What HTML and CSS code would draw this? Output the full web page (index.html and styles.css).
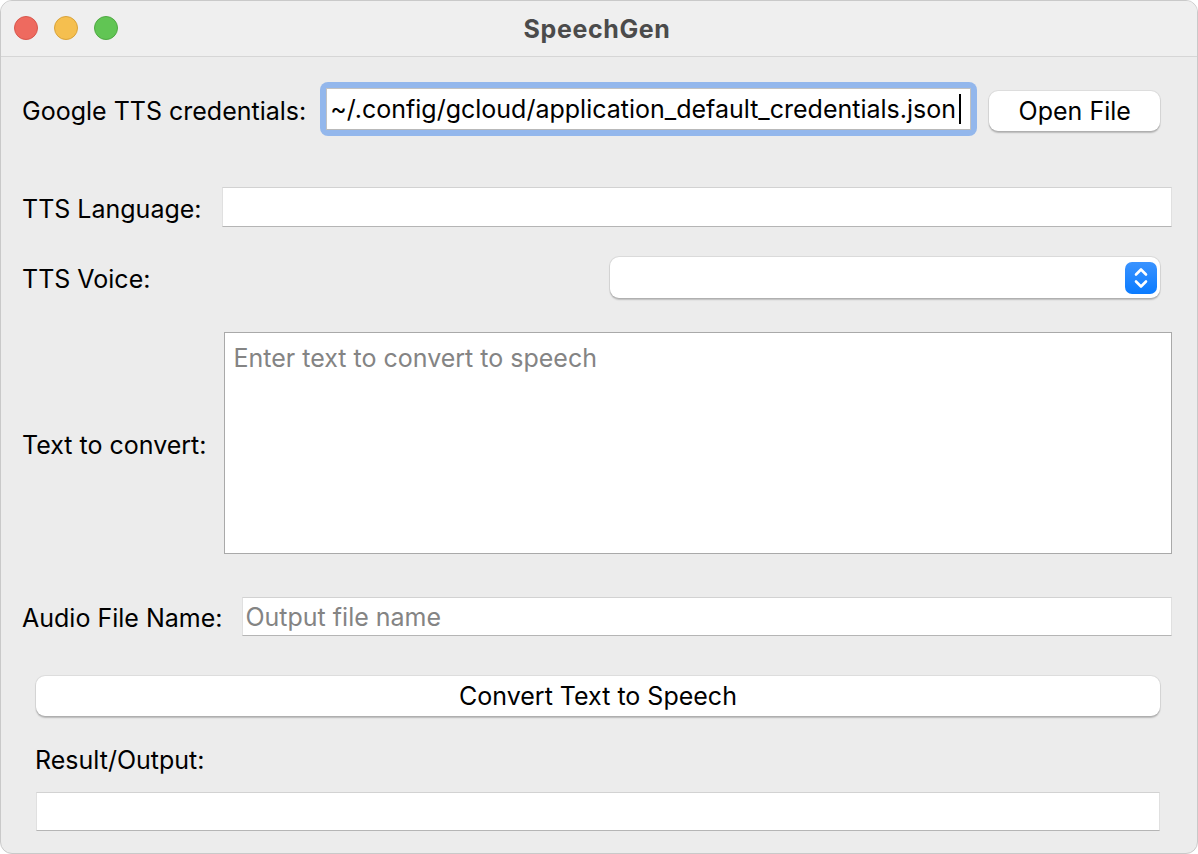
FILE: index.html
```html
<!DOCTYPE html>
<html lang="en">
<head>
<meta charset="utf-8">
<title>SpeechGen</title>
<link rel="stylesheet" href="styles.css">
</head>
<body>
<div class="window">
  <header class="titlebar">
    <div class="lights">
      <span class="light red"></span>
      <span class="light yellow"></span>
      <span class="light green"></span>
    </div>
    <div class="title">SpeechGen</div>
  </header>
  <main class="content">
    <div class="row row-cred">
      <label class="label">Google TTS credentials:</label>
      <div class="focus-ring">
        <div class="entry entry-focused">~/.config/gcloud/application_default_credentials.json<span class="caret"></span></div>
      </div>
      <button class="btn btn-open">Open File</button>
    </div>

    <div class="row row-lang">
      <label class="label">TTS Language:</label>
      <div class="entry entry-plain"></div>
    </div>

    <div class="row row-voice">
      <label class="label">TTS Voice:</label>
      <div class="spacer"></div>
      <div class="select">
        <span class="stepper">
          <svg width="20" height="26" viewBox="0 0 20 26" aria-hidden="true">
            <path d="M5 9.5 L10 4.5 L15 9.5" fill="none" stroke="#fff" stroke-width="2.6" stroke-linecap="round" stroke-linejoin="round"/>
            <path d="M5 16.5 L10 21.5 L15 16.5" fill="none" stroke="#fff" stroke-width="2.6" stroke-linecap="round" stroke-linejoin="round"/>
          </svg>
        </span>
      </div>
    </div>

    <div class="row row-text">
      <label class="label label-text">Text to convert:</label>
      <div class="textarea"><span class="placeholder">Enter text to convert to speech</span></div>
    </div>

    <div class="row row-audio">
      <label class="label">Audio File Name:</label>
      <div class="entry entry-plain entry-audio"><span class="placeholder">Output file name</span></div>
    </div>

    <button class="btn btn-convert">Convert Text to Speech</button>

    <div class="result-label">Result/Output:</div>

    <div class="entry entry-plain entry-output"></div>
  </main>
</div>
</body>
</html>
```

FILE: styles.css
```css
* { box-sizing: border-box; }

html, body {
  margin: 0;
  padding: 0;
  width: 1198px;
  height: 854px;
  overflow: hidden;
  background: #ffffff;
}

body {
  font-family: Inter, "Liberation Sans", sans-serif;
  font-size: 25px;
  color: #000;
}

.window {
  width: 1198px;
  height: 854px;
  background: #ececec;
  border: 1px solid #c9c9c9;
  border-radius: 12px;
  overflow: hidden;
  display: flex;
  flex-direction: column;
}

.titlebar {
  height: 56px;
  flex: none;
  background: #efefef;
  border-bottom: 1px solid #d6d6d6;
  position: relative;
  display: flex;
  align-items: center;
  justify-content: center;
}

.lights {
  position: absolute;
  left: 13px;
  top: 15px;
  display: flex;
  gap: 16px;
}

.light {
  width: 24px;
  height: 24px;
  border-radius: 50%;
  display: block;
}
.red { background: #ee6a5f; border: 1px solid #d8574d; }
.yellow { background: #f5bf4f; border: 1px solid #d9a33a; }
.green { background: #61c554; border: 1px solid #4fa943; }

.title {
  font-weight: 700;
  font-size: 25px;
  color: #4b4b4b;
  letter-spacing: 0.6px;
  margin-left: -4px;
}

.content {
  flex: 1;
  padding: 25px 25px 0 21px;
  display: flex;
  flex-direction: column;
}

.row {
  display: flex;
  align-items: center;
}

.label {
  flex: none;
  white-space: nowrap;
  line-height: 30px;
}

.row-cred { height: 54px; }
.row-cred .label { margin-right: 14px; padding-top: 3px; }

.focus-ring {
  width: 657px;
  height: 54px;
  padding: 6px;
  background: #93b7ec;
  border-radius: 8px;
  flex: none;
}

.entry {
  background: #fff;
  height: 40px;
  display: flex;
  align-items: center;
  white-space: nowrap;
  overflow: hidden;
}

.entry-focused {
  height: 42px;
  padding-left: 3px;
  border: 1px solid #c2c2c2;
  border-bottom-color: #b9b9b9;
}

.caret {
  display: inline-block;
  width: 2px;
  height: 30px;
  background: #000;
  margin-left: 3px;
}

.btn {
  font-family: inherit;
  font-size: 25px;
  color: #000;
  background: #fff;
  border: none;
  border-radius: 9px;
  box-shadow: 0 0 0 1px rgba(0,0,0,0.06), 0 1.5px 1.5px rgba(0,0,0,0.22);
  height: 40px;
  padding: 0;
}

.btn-open {
  width: 171px;
  margin-left: 12px;
  margin-top: 3px;
}

.entry-plain {
  flex: 1;
  border-top: 1px solid #d2d2d2;
  border-left: 1px solid #e0e0e0;
  border-right: 1px solid #e0e0e0;
  border-bottom: 1px solid #b5b5b5;
}

.row-lang { margin-top: 51px; }
.row-lang .label { margin-right: 20px; padding-top: 3px; }

.row-voice { margin-top: 30px; }
.row-voice .label { padding-top: 3px; }
.spacer { flex: 1; }

.select {
  width: 550px;
  height: 41px;
  margin-right: 12px;
  background: #fff;
  border-radius: 9px;
  box-shadow: 0 0 0 1px rgba(0,0,0,0.07), 0 1.5px 1.5px rgba(0,0,0,0.2);
  display: flex;
  align-items: center;
  justify-content: flex-end;
  padding-right: 3px;
}

.stepper {
  width: 32px;
  height: 32px;
  border-radius: 7px;
  background: linear-gradient(#3a93ff, #0a7bff);
  display: flex;
  align-items: center;
  justify-content: center;
}

.row-text {
  margin-top: 34px;
  height: 222px;
}
.row-text .label { margin-right: 17px; padding-top: 3px; }

.textarea {
  flex: 1;
  height: 222px;
  background: #fff;
  border: 1px solid #a9a9a9;
  padding: 10px 9px;
  align-self: stretch;
}

.placeholder {
  color: #848484;
  line-height: 30px;
  white-space: nowrap;
}

.row-audio { margin-top: 43px; }
.row-audio .label { margin-right: 20px; padding-top: 3px; }
.entry-audio { height: 39px; padding-left: 2px; }

.btn-convert {
  margin-top: 40px;
  margin-left: 14px;
  margin-right: 12px;
  height: 40px;
  flex: none;
}

.result-label {
  margin-top: 29px;
  margin-left: 13px;
  line-height: 30px;
}

.entry-output {
  flex: none;
  margin-top: 17px;
  margin-left: 14px;
  margin-right: 12px;
  height: 39px;
}
```
